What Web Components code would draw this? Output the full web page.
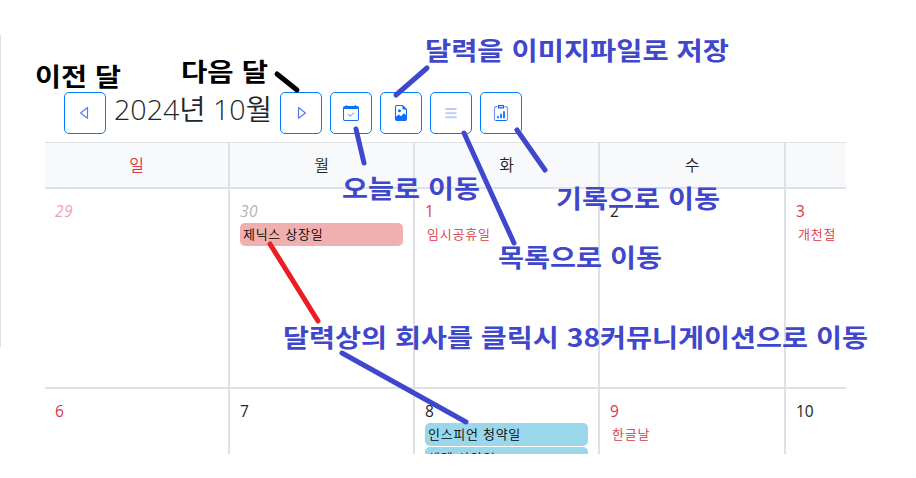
<!DOCTYPE html>
<html lang="ko"><head><meta charset="utf-8"><title>달력</title>
<style>
body{margin:0;background:#fff;color:#212529;font-family:"Open Sans","Noto Sans CJK KR",sans-serif}
</style></head><body>
<guide-page></guide-page>
<script>
const define=(name,markup)=>customElements.define(name,class extends HTMLElement{
  constructor(){super();this.attachShadow({mode:'open'}).innerHTML=typeof markup==='function'?markup(this):markup}
});

const icons={
 prev:'<path fill="none" stroke="#5b79fb" stroke-width="1.2" stroke-linejoin="round" d="M10.5 2.6v10.6L3.6 7.9z"/>',
 next:'<path fill="none" stroke="#5b79fb" stroke-width="1.2" stroke-linejoin="round" d="M5.5 2.6v10.6l6.9-5.3z"/>',
 today:'<path fill="#0d6efd" d="M2 1h1.2V0h1v1h7.6V0h1v1H14a2 2 0 0 1 2 2v11a2 2 0 0 1-2 2H2a2 2 0 0 1-2-2V3a2 2 0 0 1 2-2zM1 4v10a1 1 0 0 0 1 1h12a1 1 0 0 0 1-1V4z"/><path fill="none" stroke="#5b79fb" d="M5.3 9.2l2 2 3.6-3.7"/>',
 image:'<path fill="none" stroke="#0d6efd" stroke-width="1.1" d="M9.5.5H4A1.5 1.5 0 0 0 2.5 2v12A1.5 1.5 0 0 0 4 15.5h8a1.5 1.5 0 0 0 1.5-1.5V4.5z"/><path fill="#0d6efd" d="M9.5.5v3a1 1 0 0 0 1 1h3zM2.8 12l2.9-2.4 2.4 1.6 2.7-3 2.7 2.2V14A1.5 1.5 0 0 1 12 15.5H4A1.5 1.5 0 0 1 2.5 14z"/><circle cx="6.5" cy="5.8" r="1.5" fill="#0d6efd"/>',
 list:'<path stroke="#bcc9ff" stroke-width="1.9" d="M2.5 4h11M2.5 8.1h11M2.5 12.2h11"/>',
 record:'<path fill="none" stroke="#7c8dfb" stroke-width="1.1" d="M4.5 1.6H3A1.5 1.5 0 0 0 1.5 3v11A1.5 1.5 0 0 0 3 15.5h10a1.5 1.5 0 0 0 1.5-1.5V3A1.5 1.5 0 0 0 13 1.6h-1.5"/><path fill="none" stroke="#0d6efd" stroke-width="1.1" d="M5.5.6h5v2.3h-5zM3 15.5h10"/><path stroke="#0d6efd" stroke-width="1.8" stroke-linecap="round" d="M5 11.7v.8M8 9.5v3M11 7v5.5"/>'
};
define('icon-button',el=>`<style>
:host{display:block;width:42px;height:42px}
button{display:grid;place-items:center;width:42px;height:42px;box-sizing:border-box;padding:0;border:1px solid #007bff;border-radius:5px;background:#fff}
svg{display:block;width:16px;height:16px}
</style><button><svg viewBox="0 0 16 16">${icons[el.getAttribute('icon')]}</svg></button>`);

define('calendar-toolbar',`<style>
:host{display:flex;gap:8px;height:42px;padding-left:19px}
h2{margin:0;width:158px;font:350 28px/34px "Open Sans","Noto Sans CJK KR",sans-serif;white-space:nowrap;color:#212529}
svg{display:block;overflow:visible}
</style>
<icon-button icon="prev"></icon-button>
<h2><svg width="158" height="42"><text x="0" y="27.5" textLength="158" lengthAdjust="spacingAndGlyphs" fill="#212529">2024년 10월</text></svg></h2>
<icon-button icon="next"></icon-button><icon-button icon="today"></icon-button><icon-button icon="image"></icon-button><icon-button icon="list"></icon-button><icon-button icon="record"></icon-button>`);

define('week-day',`<style>
:host{display:flex;align-items:center;justify-content:center;box-sizing:border-box;border-right:2px solid #dee2e6;border-bottom:2px solid #dee2e6;background:#f8f9fa;font-size:16px;font-weight:350;line-height:20px}
:host([red]){color:#dc3545}
:host([last]){border-right:0}
</style><slot></slot>`);

define('calendar-day',el=>`<style>
:host{display:flex;flex-direction:column;gap:1px;box-sizing:border-box;border-right:2px solid #dee2e6;border-bottom:2px solid #dee2e6;padding:11px 10px 0;min-width:0;overflow:hidden}
:host([last]){border-right:0}
.n{font:400 15.5px/22px "Open Sans",sans-serif;letter-spacing:-.1px}
:host([red]) .n{color:#dc3545}
:host([dim]) .n{opacity:.45;font-style:italic;letter-spacing:.4px}
:host([dim]:not([red])) .n{opacity:.35}
</style><div class="n">${el.getAttribute('n')}</div><slot></slot>`);

define('day-event',`<style>
:host{display:block;flex:none;box-sizing:border-box;height:23px;padding-left:3px;border-radius:5px;font:350 13px/22px "Noto Sans CJK KR",sans-serif;letter-spacing:.7px;white-space:nowrap;color:#000}
:host([kind=listing]){background:#f1b0b0}
:host([kind=offer]){background:#9bd7eb}
:host([kind=holiday]){color:#dc3545;padding-left:2px;letter-spacing:.8px}
</style><slot></slot>`);

define('month-calendar',`<style>
:host{display:grid;grid-template-columns:185px 185px 185px 186px 60px;grid-template-rows:46px 200px 200px;width:801px;height:312px;box-sizing:border-box;border-top:1px solid #dee2e6;overflow:hidden}
</style>
<week-day red>일</week-day><week-day>월</week-day><week-day>화</week-day><week-day>수</week-day><week-day last></week-day>
<calendar-day n="29" red dim></calendar-day>
<calendar-day n="30" dim><day-event kind="listing">제닉스 상장일</day-event></calendar-day>
<calendar-day n="1" red><day-event kind="holiday">임시공휴일</day-event></calendar-day>
<calendar-day n="2"></calendar-day>
<calendar-day n="3" red last><day-event kind="holiday">개천절</day-event></calendar-day>
<calendar-day n="6" red></calendar-day>
<calendar-day n="7"></calendar-day>
<calendar-day n="8"><day-event kind="offer">인스피언 청약일</day-event><day-event kind="offer">셀렘 상약일</day-event></calendar-day>
<calendar-day n="9" red><day-event kind="holiday">한글날</day-event></calendar-day>
<calendar-day n="10" last></calendar-day>`);

const notes=[
 ['이전 달',35,86,86,'#000'],['다음 달',181,81,87,'#000'],
 ['달력을 이미지파일로 저장',425,60,304],['오늘로 이동',342,198,138],
 ['기록으로 이동',556,208,164],['목록으로 이동',498,267,164],
 ['달력상의 회사를 클릭시 38커뮤니게이션으로 이동',283,346.5,585]];
const strokes=[[277,74,297,90,'#000'],[427,68,396,95],[356,129,364,163],[464,133,514,243],[517,130,545,170],[270,244,318,321,'#ed1c24'],[342,353,466,422]];
define('note-layer',`<style>
:host{display:block;position:absolute;inset:0;pointer-events:none}
svg{display:block}
text{font:700 25px "Noto Sans CJK KR",sans-serif}
line{stroke-width:5;stroke-linecap:round}
</style><svg width="916" height="478">
${strokes.map(([a,b,c,d,k='#3f48cc'])=>`<line x1="${a}" y1="${b}" x2="${c}" y2="${d}" stroke="${k}"/>`).join('')}
${notes.map(([t,x,y,w,k='#3f48cc'])=>`<text x="${x}" y="${y}" textLength="${w}" lengthAdjust="spacingAndGlyphs" fill="${k}">${t}</text>`).join('')}
</svg>`);

define('guide-page',`<style>
:host{display:grid;grid-template-columns:1px 1fr;column-gap:44px;position:relative;width:916px;height:478px;overflow:hidden}
.edge{background:#dee2e6;margin-top:35px;height:312px}
main{display:flex;flex-direction:column;gap:8px;padding-top:92px}
</style><div class="edge"></div><main><calendar-toolbar></calendar-toolbar><month-calendar></month-calendar></main><note-layer></note-layer>`);
</script></body></html>
